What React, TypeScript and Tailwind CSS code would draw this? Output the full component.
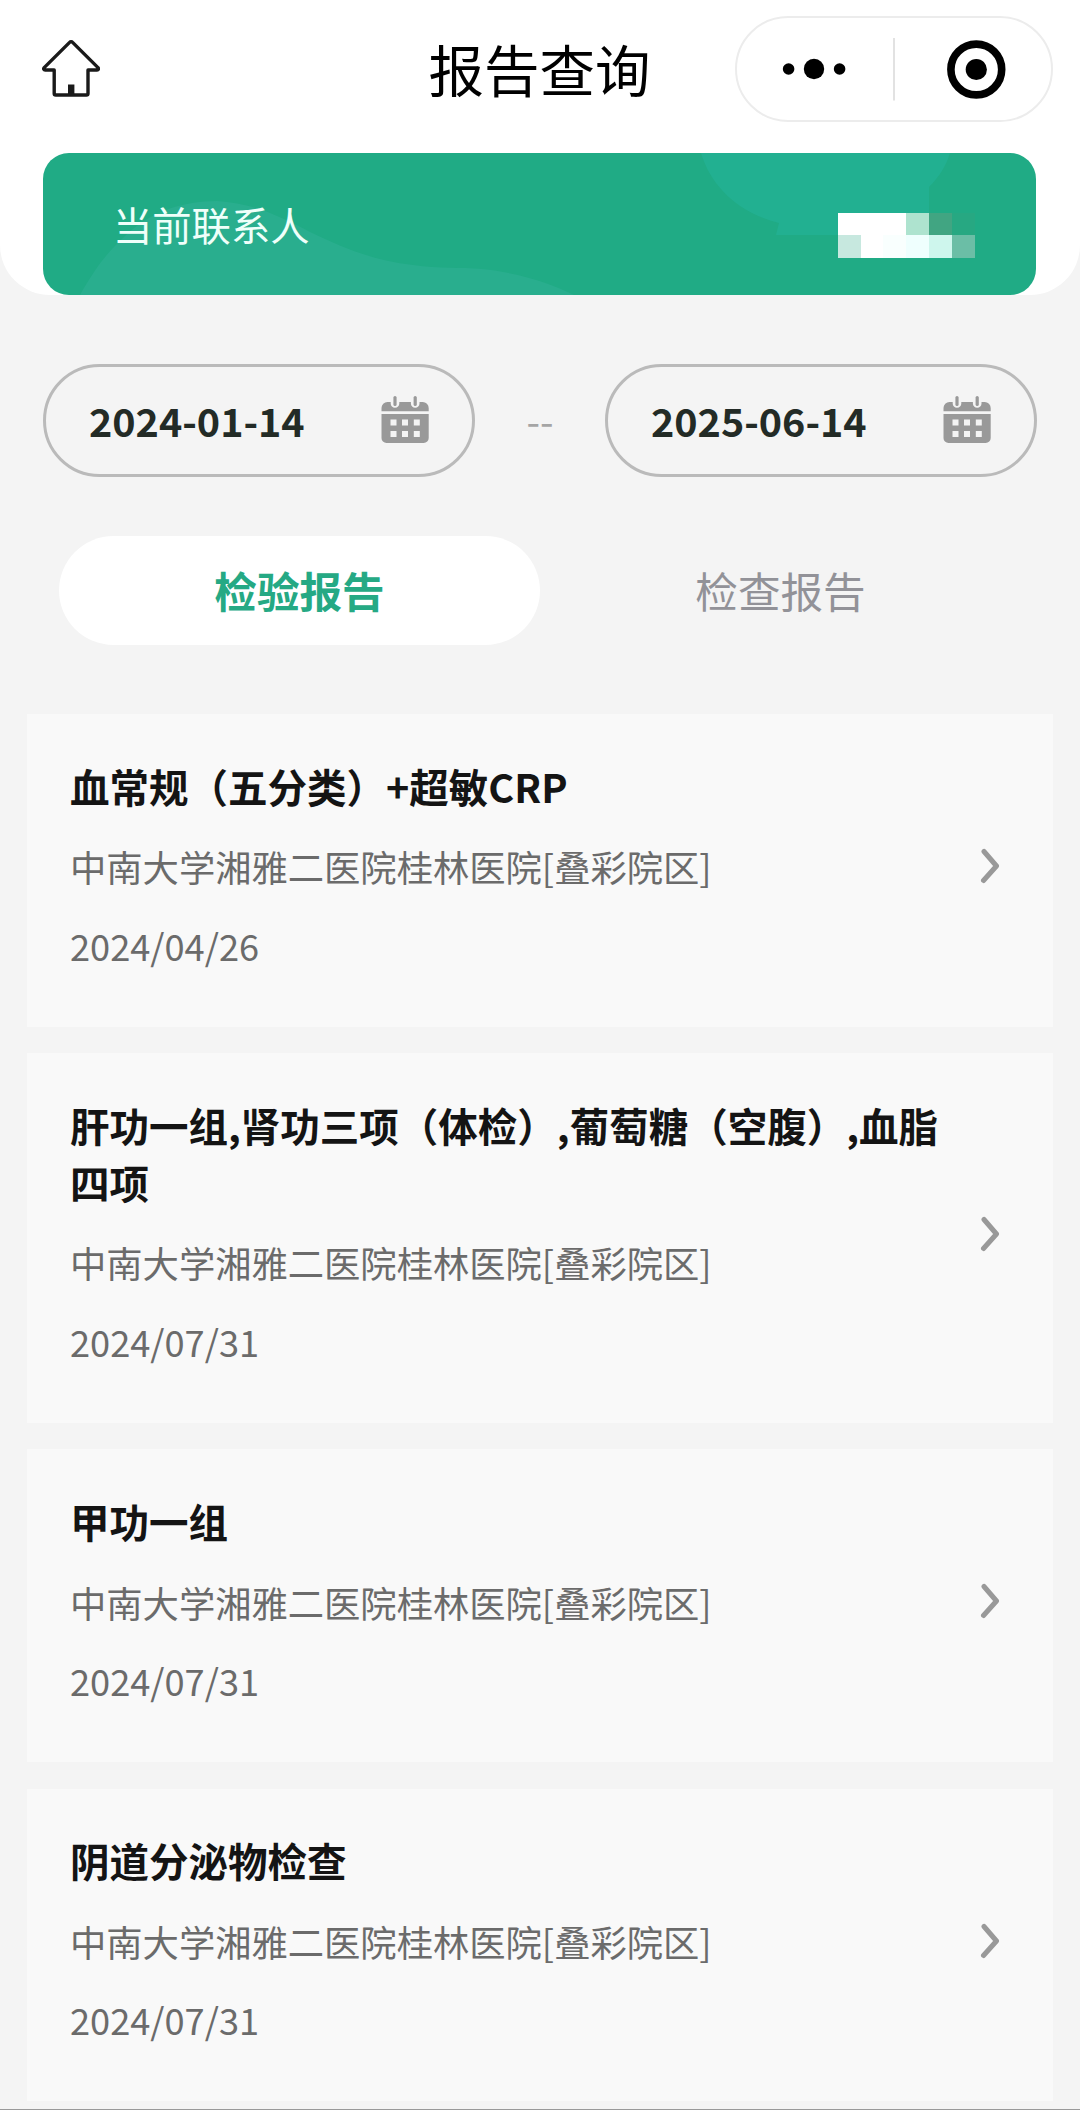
const reports = [
  {
    id: 1,
    title: "血常规（五分类）+超敏CRP",
    hospital: "中南大学湘雅二医院桂林医院[叠彩院区]",
    date: "2024/04/26",
  },
  {
    id: 2,
    title: "肝功一组,肾功三项（体检）,葡萄糖（空腹）,血脂四项",
    hospital: "中南大学湘雅二医院桂林医院[叠彩院区]",
    date: "2024/07/31",
  },
  {
    id: 3,
    title: "甲功一组",
    hospital: "中南大学湘雅二医院桂林医院[叠彩院区]",
    date: "2024/07/31",
  },
  {
    id: 4,
    title: "阴道分泌物检查",
    hospital: "中南大学湘雅二医院桂林医院[叠彩院区]",
    date: "2024/07/31",
  },
];

// Mosaic over the contact's name, two rows of six cells
const mosaic = [
  ["#ffffff", "#ffffff", "#ffffff", "#aee3cf", "#41a582", "#27a882"],
  ["#c7e8df", "#ffffff", "#f9fffe", "#effffe", "#cef6ed", "#6bbea6"],
];

function HomeIcon() {
  return (
    <svg width="58" height="57" viewBox="0 0 58 57" fill="none">
      <path
        d="M27.6 2.4 2.2 27.6c-1 1.2-.4 2.4 1 2.4h9v23.4c0 .9.6 1.6 1.6 1.6h30.6c1 0 1.6-.7 1.6-1.6V30h9c1.4 0 2-1.2 1-2.4L30.6 2.4a2 2 0 0 0-3 0Z"
        stroke="#1a1a1a"
        strokeWidth="3.4"
        strokeLinejoin="round"
      />
      <path d="M26 44.5h6.4V55H26z" fill="#1a1a1a" />
    </svg>
  );
}

function CalendarIcon() {
  return (
    <svg className="-mt-[1px]" width="48" height="48" viewBox="0 0 48 48" fill="#999999">
      <path d="M.5 15.2V12a6 6 0 0 1 6-6h3.2v1.5a4.3 4.3 0 0 0 8.6 0V6h11.6v1.5a4.3 4.3 0 0 0 8.6 0V6h3.2a6 6 0 0 1 6 6v3.2z" />
      <rect x="12.4" y="0" width="3.2" height="10" rx="1.6" />
      <rect x="32.6" y="0" width="3.2" height="10" rx="1.6" />
      <path
        fillRule="evenodd"
        d="M.5 18h47.2v24a5 5 0 0 1-5 5H5.5a5 5 0 0 1-5-5zM9.5 23.5v6h6v-6zM21 23.5v6h6v-6zM32.8 23.5v6h6v-6zM9.5 35v6h6v-6zM21 35v6h6v-6zM32.8 35v6h6v-6z"
      />
    </svg>
  );
}

function BannerArt() {
  return (
    <svg className="absolute inset-0" width="993" height="142" viewBox="43 153 993 142">
      <path
        d="M80 295C94 270 106 254 121 240C148 212 182 201 217 201C252 203 280 216 310 232C345 249 376 261 413 265C440 269 460 267 482 269C520 273 552 284 574 295Z"
        fill="#29ae8e"
      />
      <path d="M701 153C711 186 737 212 779 223L776 235H929V187C939 177 946 166 950 153Z" fill="#22b091" />
      <g shapeRendering="crispEdges">
        {mosaic.map((row, y) =>
          row.map((color, x) => (
            <rect
              key={`${x}-${y}`}
              x={838 + x * 22.7}
              y={212.7 + y * 22.6}
              width="23"
              height="22.8"
              fill={color}
            />
          ))
        )}
      </g>
    </svg>
  );
}

function DateField({ value }: { value: string }) {
  return (
    <button className="flex h-[113px] w-[432px] items-center justify-between rounded-full border-3 border-[#bababa] pr-[43px] pl-[43px]">
      <span className="-mt-[2px] text-[39.5px] font-bold text-[#232b26]">{value}</span>
      <CalendarIcon />
    </button>
  );
}

function ReportCard({ title, hospital, date }: { title: string; hospital: string; date: string }) {
  return (
    <li className="flex items-center justify-between bg-[#f9f9f9] pt-[43.5px] pr-[53px] pb-[40px] pl-[43px]">
      <div className="w-[880px]">
        <h2 className="text-[39.5px] leading-[56.7px] font-bold text-[#141414]">{title}</h2>
        <p className="mt-[26px] text-[36.3px] leading-[52px] text-[#6b6b6b]">{hospital}</p>
        <p className="mt-[26.5px] mb-[42px] h-[26px] text-[36.2px] leading-[52px] text-[#6b6b6b]">{date}</p>
      </div>
      <svg className="mb-[12px]" width="20" height="36" viewBox="0 0 20 36" fill="none">
        <path d="M4 3.5 16.5 18 3.5 32.5" stroke="#999999" strokeWidth="5" strokeLinecap="round" strokeLinejoin="round" />
      </svg>
    </li>
  );
}

export default function App() {
  return (
    <main className="flex h-[2110px] flex-col overflow-hidden border-b border-[#999999] bg-[#f4f4f4] font-['Noto_Sans_CJK_SC',sans-serif]">
      {/* Title bar and current contact */}
      <header className="h-[295px] rounded-b-[50px] bg-white pr-[44px] pl-[43px]">
        <div className="relative flex h-[153px] items-start justify-center">
          <button className="absolute top-[40px] left-[-1px]">
            <HomeIcon />
          </button>
          <h1 className="mt-[28px] text-[55.5px] leading-[80px] text-black">报告查询</h1>
          <div className="absolute top-[16px] right-[-17px] flex h-[106px] w-[318px] items-center rounded-full border-2 border-[#ececec]">
            <svg width="314" height="102" viewBox="737 18 314 102">
              <circle cx="788.6" cy="69" r="5.8" />
              <circle cx="814" cy="69" r="10.2" />
              <circle cx="839.6" cy="69" r="5.8" />
              <path d="M894 38v62.5" stroke="#e2e2e2" strokeWidth="2" />
              <circle cx="976.3" cy="69.5" r="25.4" fill="none" stroke="#000" strokeWidth="7.6" />
              <circle cx="976.3" cy="69.5" r="10.6" />
            </svg>
          </div>
        </div>
        <section className="relative flex h-[142px] items-center overflow-hidden rounded-[26px] bg-[#20ab85] pl-[70px]">
          <BannerArt />
          <span className="relative text-[39.3px] text-[#effffa]">当前联系人</span>
        </section>
      </header>

      {/* Date range */}
      <section className="mt-[69px] flex items-center justify-between px-[43px]">
        <DateField value="2024-01-14" />
        <span className="-mt-[2px] text-[39px] text-[#a5a5a5]">--</span>
        <DateField value="2025-06-14" />
      </section>

      {/* Report type tabs */}
      <nav className="mt-[59px] flex px-[59px] text-[42.6px]">
        <button className="h-[109px] flex-1 rounded-full bg-white pb-[1px] font-bold text-[#25a984]">检验报告</button>
        <button className="h-[109px] flex-1 pb-[1px] text-[#929298]">检查报告</button>
      </nav>

      <ul className="mt-[69px] flex flex-col gap-[26.6px] px-[27px]">
        {reports.map((report) => (
          <ReportCard key={report.id} title={report.title} hospital={report.hospital} date={report.date} />
        ))}
      </ul>
    </main>
  );
}
